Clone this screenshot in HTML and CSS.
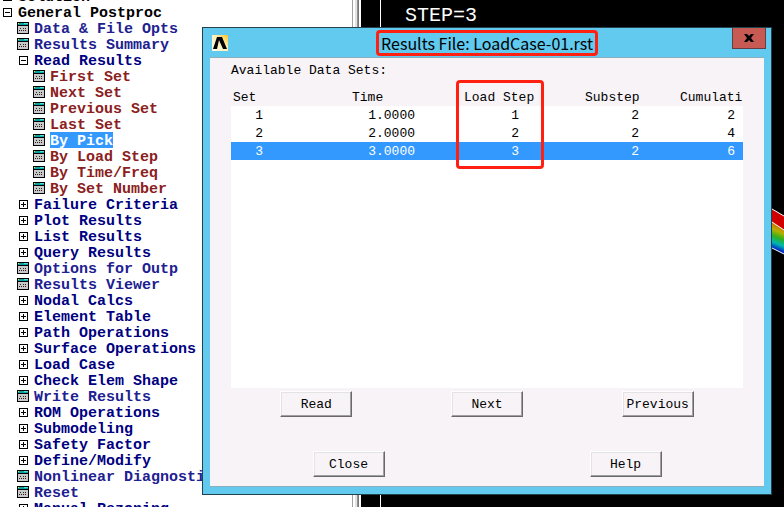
FILE: index.html
```html
<!DOCTYPE html>
<html lang="en">

<head>
    <meta charset="UTF-8">
    <meta name="viewport" content="width=device-width, initial-scale=1.0">
    <title>Results File: LoadCase-01.rst</title>
    <link rel="stylesheet" href="styles.css">
</head>

<body>
    <svg class="defs" aria-hidden="true">
        <symbol id="minus" viewBox="0 0 9 9">
            <rect x="0.5" y="0.5" width="8" height="8" fill="#fff" stroke="#000" />
            <path d="M2 4.5h5" stroke="#000" />
        </symbol>
        <symbol id="plus" viewBox="0 0 9 9">
            <rect x="0.5" y="0.5" width="8" height="8" fill="#fff" stroke="#000" />
            <path d="M2 4.5h5M4.5 2v5" stroke="#000" />
        </symbol>
        <symbol id="form" viewBox="0 0 12 12">
            <rect width="12" height="12" fill="#000" />
            <rect x="1" y="1" width="10" height="2" fill="#00a5a5" />
            <rect x="1" y="1" width="1" height="1" fill="#ffe800" />
            <rect x="7" y="1" width="4" height="1" fill="#5fd7d7" />
            <rect x="1" y="4" width="10" height="7" fill="#c8c8c8" />
            <path d="M3 6.5h1M6 6.5h1M8 6.5h1M2 8.5h1M4 8.5h1M6 8.5h1M8 8.5h1" stroke="#222" />
        </symbol>
    </svg>

    <div class="app">
        <nav class="menu">
            <ul class="tree">
                <li>
                    <div class="row"><button class="toggle" aria-label="Expand"><svg><use href="#minus" /></svg></button><a href="#">Solution</a></div>
                </li>
                <li>
                    <div class="row"><button class="toggle" aria-label="Collapse"><svg><use href="#minus" /></svg></button><a href="#">General Postproc</a></div>
                    <ul class="branch">
                        <li class="row leaf"><svg class="form"><use href="#form" /></svg><a href="#">Data &amp; File Opts</a></li>
                        <li class="row leaf"><svg class="form"><use href="#form" /></svg><a href="#">Results Summary</a></li>
                        <li>
                            <div class="row"><button class="toggle" aria-label="Collapse"><svg><use href="#minus" /></svg></button><a href="#">Read Results</a></div>
                            <ul class="commands">
                                <li class="row"><svg class="form"><use href="#form" /></svg><a href="#">First Set</a></li>
                                <li class="row"><svg class="form"><use href="#form" /></svg><a href="#">Next Set</a></li>
                                <li class="row"><svg class="form"><use href="#form" /></svg><a href="#">Previous Set</a></li>
                                <li class="row"><svg class="form"><use href="#form" /></svg><a href="#">Last Set</a></li>
                                <li class="row"><svg class="form"><use href="#form" /></svg><a href="#" class="selected">By Pick</a></li>
                                <li class="row"><svg class="form"><use href="#form" /></svg><a href="#">By Load Step</a></li>
                                <li class="row"><svg class="form"><use href="#form" /></svg><a href="#">By Time/Freq</a></li>
                                <li class="row"><svg class="form"><use href="#form" /></svg><a href="#">By Set Number</a></li>
                            </ul>
                        </li>
                        <li class="row"><button class="toggle" aria-label="Expand"><svg><use href="#plus" /></svg></button><a href="#">Failure Criteria</a></li>
                        <li class="row"><button class="toggle" aria-label="Expand"><svg><use href="#plus" /></svg></button><a href="#">Plot Results</a></li>
                        <li class="row"><button class="toggle" aria-label="Expand"><svg><use href="#plus" /></svg></button><a href="#">List Results</a></li>
                        <li class="row"><button class="toggle" aria-label="Expand"><svg><use href="#plus" /></svg></button><a href="#">Query Results</a></li>
                        <li class="row leaf"><svg class="form"><use href="#form" /></svg><a href="#">Options for Outp</a></li>
                        <li class="row leaf"><svg class="form"><use href="#form" /></svg><a href="#">Results Viewer</a></li>
                        <li class="row"><button class="toggle" aria-label="Expand"><svg><use href="#plus" /></svg></button><a href="#">Nodal Calcs</a></li>
                        <li class="row"><button class="toggle" aria-label="Expand"><svg><use href="#plus" /></svg></button><a href="#">Element Table</a></li>
                        <li class="row"><button class="toggle" aria-label="Expand"><svg><use href="#plus" /></svg></button><a href="#">Path Operations</a></li>
                        <li class="row"><button class="toggle" aria-label="Expand"><svg><use href="#plus" /></svg></button><a href="#">Surface Operations</a></li>
                        <li class="row"><button class="toggle" aria-label="Expand"><svg><use href="#plus" /></svg></button><a href="#">Load Case</a></li>
                        <li class="row"><button class="toggle" aria-label="Expand"><svg><use href="#plus" /></svg></button><a href="#">Check Elem Shape</a></li>
                        <li class="row leaf"><svg class="form"><use href="#form" /></svg><a href="#">Write Results</a></li>
                        <li class="row"><button class="toggle" aria-label="Expand"><svg><use href="#plus" /></svg></button><a href="#">ROM Operations</a></li>
                        <li class="row"><button class="toggle" aria-label="Expand"><svg><use href="#plus" /></svg></button><a href="#">Submodeling</a></li>
                        <li class="row"><button class="toggle" aria-label="Expand"><svg><use href="#plus" /></svg></button><a href="#">Safety Factor</a></li>
                        <li class="row"><button class="toggle" aria-label="Expand"><svg><use href="#plus" /></svg></button><a href="#">Define/Modify</a></li>
                        <li class="row leaf"><svg class="form"><use href="#form" /></svg><a href="#">Nonlinear Diagnostics</a></li>
                        <li class="row leaf"><svg class="form"><use href="#form" /></svg><a href="#">Reset</a></li>
                        <li class="row"><button class="toggle" aria-label="Expand"><svg><use href="#plus" /></svg></button><a href="#">Manual Rezoning</a></li>
                    </ul>
                </li>
            </ul>
        </nav>

        <div class="splitter"></div>

        <main class="graphics">
            <div class="viewport">
                <p class="step">STEP=3</p>
            </div>
            <svg class="contour" viewBox="0 0 12 48" aria-hidden="true">
                <defs>
                    <linearGradient id="bands" gradientUnits="userSpaceOnUse" x1="9" y1="18" x2="0" y2="40">
                        <stop offset="0" stop-color="#d07000" />
                        <stop offset="0.25" stop-color="#b8b000" />
                        <stop offset="0.5" stop-color="#30b020" />
                        <stop offset="0.75" stop-color="#00b8b0" />
                        <stop offset="1" stop-color="#0020c8" />
                    </linearGradient>
                </defs>
                <path d="M0 1L12 8V22L0 14Z" fill="#d00000" />
                <path d="M0 14L12 22V46L0 40Z" fill="url(#bands)" />
                <path d="M0 1L12 8M0 14L12 22M0 40L12 46" stroke="#fff" stroke-width="1" />
            </svg>
        </main>
    </div>

    <section class="dialog" role="dialog" aria-labelledby="dialogTitle">
        <header class="titlebar">
            <svg class="logo" viewBox="0 0 16 16" aria-hidden="true">
                <defs>
                    <linearGradient id="glow" x1="0" y1="1" x2="1" y2="0">
                        <stop offset="0" stop-color="#fffbe8" />
                        <stop offset="0.6" stop-color="#ffeeb0" />
                        <stop offset="1" stop-color="#ffc020" />
                    </linearGradient>
                </defs>
                <rect width="16" height="16" fill="url(#glow)" />
                <path d="M1 14L5 2H10L15 14H11L7 5L5 14Z" fill="#000" />
            </svg>
            <h1 id="dialogTitle">Results File: LoadCase-01.rst</h1>
            <button class="close" aria-label="Close window">
                <svg viewBox="0 0 10 8"><path d="M0 0H3L5 2L7 0H10L7 4L10 8H7L5 6L3 8H0L3 4Z" /></svg>
            </button>
        </header>

        <div class="panel">
            <p class="caption" id="setsCaption">Available Data Sets:</p>
            <div class="list">
                <table aria-labelledby="setsCaption">
                    <thead>
                        <tr>
                            <th class="set">Set</th>
                            <th class="time">Time</th>
                            <th class="load-step">Load Step</th>
                            <th class="substep">Substep</th>
                            <th class="cumulative">Cumulati</th>
                        </tr>
                    </thead>
                    <tbody>
                        <tr><td>1</td><td>1.0000</td><td class="load-step">1</td><td>2</td><td>2</td></tr>
                        <tr><td>2</td><td>2.0000</td><td class="load-step">2</td><td>2</td><td>4</td></tr>
                        <tr class="selected"><td>3</td><td>3.0000</td><td class="load-step">3</td><td>2</td><td>6</td></tr>
                    </tbody>
                </table>
                <div class="marker"></div>
            </div>
            <div class="buttons">
                <button>Read</button>
                <button>Next</button>
                <button>Previous</button>
            </div>
            <div class="buttons bottom">
                <button>Close</button>
                <button>Help</button>
            </div>
        </div>
    </section>
</body>

</html>
```
FILE: styles.css
```css
* {
    box-sizing: border-box;
}

body {
    margin: 0;
    height: 100vh;
    overflow: hidden;
    position: relative;
    background: white;
    font-family: "Liberation Mono", monospace;
    font-size: 13px;
    line-height: 16px;
    color: black;
}

button {
    font: inherit;
    color: inherit;
    padding: 0;
}

p,
h1,
ul {
    margin: 0;
    padding: 0;
}

.defs {
    position: absolute;
    width: 0;
    height: 0;
}

.app {
    display: flex;
    height: 100%;
}

/* main menu tree */
.menu {
    width: 352px;
    flex-shrink: 0;
    overflow: hidden;
}

.tree {
    margin-top: -12px;
    padding-left: 1px;
    list-style: none;
    font-size: 15px;
    font-weight: bold;
}

.tree ul {
    padding-left: 16px;
    list-style: none;
}

.row {
    display: flex;
    align-items: center;
    height: 16px;
    gap: 5px;
    white-space: nowrap;
}

.row a {
    height: 16px;
    padding-top: 2px;
    color: inherit;
    text-decoration: none;
}

.branch {
    color: #000080;
}

.leaf {
    color: #202090;
}

.commands {
    color: #8b2020;
}

.row a.selected {
    background: #3399ff;
    color: white;
}

.toggle {
    width: 9px;
    height: 9px;
    margin-left: 2px;
    margin-right: 1px;
    border: none;
    background: none;
}

.toggle svg {
    display: block;
    width: 9px;
    height: 9px;
}

.form {
    width: 12px;
    height: 12px;
}

.splitter {
    width: 9px;
    flex-shrink: 0;
    background: linear-gradient(to right, #a0a0a0 1px, #fff 1px, #fff 3px, #e3e3e3 3px, #e3e3e3 5px, #a0a0a0 5px, #696969 7px, #fff 7px);
}

/* graphics window */
.graphics {
    flex: 1;
    position: relative;
    background: black;
    padding-left: 19px;
}

.viewport {
    height: 100%;
    border-left: 1px solid white;
    padding: 4px 24px;
}

.step {
    color: white;
    font-size: 20px;
    line-height: 24px;
}

.contour {
    position: absolute;
    right: 0;
    top: 208px;
    width: 12px;
    height: 48px;
}

/* results dialog */
.dialog {
    position: absolute;
    left: 202px;
    right: 12px;
    top: 27px;
    bottom: 12px;
    display: flex;
    flex-direction: column;
    border: 1px solid #24414e;
    background: #62caef;
}

.titlebar {
    display: grid;
    grid-template-columns: 1fr auto 1fr;
    align-items: center;
    height: 29px;
}

.logo {
    width: 16px;
    height: 16px;
    margin-left: 9px;
}

.titlebar h1 {
    padding: 0 2px;
    border: 3px solid #ff2012;
    border-radius: 4px;
    font-family: "Noto Sans CJK SC", sans-serif;
    font-size: 16px;
    font-weight: normal;
    line-height: 20px;
}

.close {
    justify-self: end;
    align-self: start;
    display: flex;
    align-items: center;
    justify-content: center;
    width: 34px;
    height: 21px;
    margin-right: 5px;
    border: 1px solid #653d43;
    border-top: none;
    background: #c75a52;
}

.close svg {
    width: 10px;
    height: 8px;
}

.panel {
    flex: 1;
    display: flex;
    flex-direction: column;
    margin: 0 7px 7px;
    padding: 5px 21px 9px;
    border-top: 1px solid #8ab0c0;
    border-bottom: 1px solid #8ab0c0;
    background: #f7f3f7;
}

.caption {
    margin-bottom: 10px;
}

.list {
    flex: 1;
    position: relative;
    background: white;
}

table {
    width: 100%;
    table-layout: fixed;
    border-collapse: collapse;
}

th {
    height: 17px;
    padding: 1px 0 0;
    background: #f7f3f7;
    font-weight: normal;
    text-align: left;
    white-space: nowrap;
}

td {
    height: 18px;
    padding: 2px 8px 0 0;
    text-align: right;
}

th.set {
    width: 40px;
    padding-left: 2px;
}

th.time {
    width: 152px;
    padding-left: 81px;
}

th.load-step {
    width: 120px;
    padding-left: 41px;
}

th.substep {
    width: 104px;
    padding-left: 42px;
}

th.cumulative {
    padding-left: 33px;
}

td.load-step {
    padding-right: 24px;
}

tr.selected {
    background: #3399ff;
    color: white;
}

.marker {
    position: absolute;
    left: 225px;
    top: -9px;
    width: 88px;
    height: 89px;
    border: 3px solid #ff2012;
    border-radius: 4px;
}

.buttons {
    display: grid;
    grid-template-columns: repeat(3, 1fr);
    justify-items: center;
    margin-top: 3px;
}

.buttons.bottom {
    grid-template-columns: repeat(2, 1fr);
    margin: 34px -21px 0;
}

.buttons button {
    width: 72px;
    height: 26px;
    padding-top: 2px;
    border: 1px solid;
    border-color: #fff #696969 #696969 #fff;
    background: #f7f3f7;
    box-shadow: inset -1px -1px #a0a0a0, inset 1px 1px #e3e3e3;
}
```
